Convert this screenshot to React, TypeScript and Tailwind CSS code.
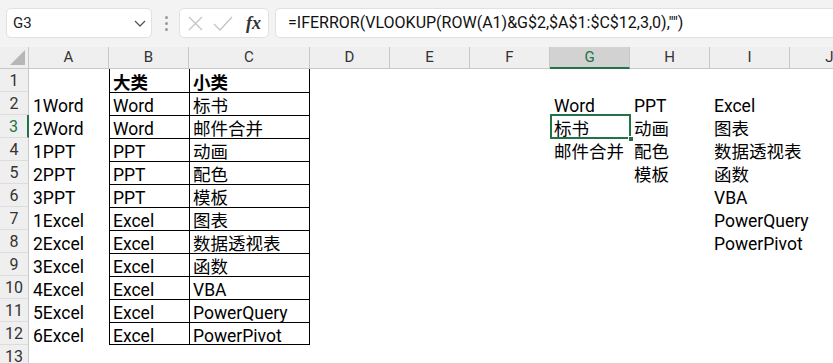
import React from "react";

const COLS = ["A", "B", "C", "D", "E", "F", "G", "H", "I", "J"];

type Row = { a?: string; b?: string; c?: string; g?: string; h?: string; i?: string };

const DATA: Row[] = [
  { b: "大类", c: "小类" },
  { a: "1Word", b: "Word", c: "标书", g: "Word", h: "PPT", i: "Excel" },
  { a: "2Word", b: "Word", c: "邮件合并", g: "标书", h: "动画", i: "图表" },
  { a: "1PPT", b: "PPT", c: "动画", g: "邮件合并", h: "配色", i: "数据透视表" },
  { a: "2PPT", b: "PPT", c: "配色", h: "模板", i: "函数" },
  { a: "3PPT", b: "PPT", c: "模板", i: "VBA" },
  { a: "1Excel", b: "Excel", c: "图表", i: "PowerQuery" },
  { a: "2Excel", b: "Excel", c: "数据透视表", i: "PowerPivot" },
  { a: "3Excel", b: "Excel", c: "函数" },
  { a: "4Excel", b: "Excel", c: "VBA" },
  { a: "5Excel", b: "Excel", c: "PowerQuery" },
  { a: "6Excel", b: "Excel", c: "PowerPivot" },
  {},
];

function bBorder(n: number) {
  if (n === 1) return "shadow-[inset_1px_0_0_#000]";
  if (n === 12) return "shadow-[inset_1px_1px_0_#000,inset_0_-1px_0_#000]";
  if (n < 12) return "shadow-[inset_1px_1px_0_#000]";
  return "";
}

function cBorder(n: number) {
  if (n === 1) return "shadow-[inset_1px_0_0_#000,inset_-1px_0_0_#000]";
  if (n === 12) return "shadow-[inset_1px_1px_0_#000,inset_-1px_-1px_0_#000]";
  if (n < 12) return "shadow-[inset_1px_1px_0_#000,inset_-1px_0_0_#000]";
  return "";
}

function Cell({
  text,
  className = "",
  bold = false,
  children,
}: {
  text?: string;
  className?: string;
  bold?: boolean;
  children?: React.ReactNode;
}) {
  return (
    <div
      className={`relative h-[23px] whitespace-nowrap pl-[4px] pt-[3px] text-[17.5px] leading-[23px] text-black ${
        bold ? "font-bold" : ""
      } ${className}`}
    >
      {text}
      {children}
    </div>
  );
}

export default function App() {
  return (
    <div className="h-[363px] w-[833px] overflow-hidden bg-white font-['Roboto','Noto_Sans_CJK_SC',sans-serif]">
      {/* Formula bar */}
      <div className="flex h-[47px] items-start bg-[#f3f3f3] pt-[8px]">
        <div className="ml-[6px] flex h-[30px] w-[146px] items-center justify-between rounded-[5px] border border-[#e1e1e1] bg-white pl-[6px] pr-[4px]">
          <span className="text-[15px] text-[#222]">G3</span>
          <svg width="14" height="10" viewBox="0 0 14 10">
            <path d="M2 3 L7 8 L12 3" fill="none" stroke="#555" strokeWidth="1.3" />
          </svg>
        </div>
        <div className="ml-[12px] flex h-[30px] w-[4px] flex-col items-center justify-center gap-[3px]">
          <div className="h-[3px] w-[3px] rounded-full bg-[#9a9a9a]" />
          <div className="h-[3px] w-[3px] rounded-full bg-[#9a9a9a]" />
          <div className="h-[3px] w-[3px] rounded-full bg-[#9a9a9a]" />
        </div>
        <div className="ml-[11px] flex h-[30px] w-[90px] items-center rounded-[5px] border border-[#e1e1e1] bg-white">
          <svg className="ml-[8px]" width="15" height="15" viewBox="0 0 15 15">
            <path d="M1 1 L14 14 M14 1 L1 14" stroke="#c4c4c4" strokeWidth="1.3" fill="none" />
          </svg>
          <svg className="ml-[10px]" width="20" height="15" viewBox="0 0 20 15">
            <path d="M1 8 L7 14 L19 1" stroke="#c4c4c4" strokeWidth="1.3" fill="none" />
          </svg>
          <span className="ml-[13px] font-['Liberation_Serif',serif] text-[18px] font-bold italic leading-none text-[#333]">
            fx
          </span>
        </div>
        <div className="ml-[6px] flex h-[30px] flex-1 items-center rounded-l-[5px] border border-r-0 border-[#e1e1e1] bg-white pl-[12px] text-[16px] text-[#111]">
          =IFERROR(VLOOKUP(ROW(A1)&amp;G$2,$A$1:$C$12,3,0),"")
        </div>
      </div>

      {/* Sheet */}
      <div className="grid grid-cols-[29px_80px_80px_121px_80px_80px_80px_80px_80px_80px_80px]">
        {/* Header row */}
        <div className="relative h-[22px] border-b border-r border-[#c8c8c8] bg-[#efefef]">
          <svg className="absolute bottom-[3px] right-[3px]" width="15" height="15" viewBox="0 0 15 15">
            <path d="M15 0 L15 15 L0 15 Z" fill="#b7b7b7" />
          </svg>
        </div>
        {COLS.map((c) => (
          <div
            key={c}
            className={`flex h-[22px] items-center justify-center border-r text-[15px] leading-none ${
              c === "G"
                ? "border-b-2 border-r-[#c8c8c8] border-b-[#217346] bg-[#d2d2d2] text-[#217346]"
                : "border-b border-[#c8c8c8] bg-[#efefef] text-[#333]"
            }`}
          >
            {c}
          </div>
        ))}

        {/* Rows */}
        {DATA.map((r, idx) => {
          const n = idx + 1;
          return (
            <React.Fragment key={n}>
              <div
                className={`flex h-[23px] items-center justify-center border-b bg-[#efefef] pt-[1px] text-[16px] leading-none ${
                  n === 3
                    ? "border-r-2 border-b-[#dcdcdc] border-r-[#217346] bg-[#d2d2d2] text-[#217346]"
                    : "border-r border-[#dcdcdc] border-r-[#c8c8c8] text-[#333]"
                }`}
              >
                {n}
              </div>
              <Cell text={r.a} />
              <Cell text={r.b} bold={n === 1} className={bBorder(n)} />
              <Cell text={r.c} bold={n === 1} className={cBorder(n)} />
              <Cell />
              <Cell />
              <Cell />
              <Cell text={r.g}>
                {n === 3 && (
                  <>
                    <div className="pointer-events-none absolute -bottom-[1px] left-0 -right-[1px] -top-[1px] border-2 border-[#217346]" />
                    <div className="absolute -bottom-[4px] -right-[4px] h-[6px] w-[6px] border border-white bg-[#217346]" />
                  </>
                )}
              </Cell>
              <Cell text={r.h} />
              <Cell text={r.i} />
              <Cell />
            </React.Fragment>
          );
        })}
      </div>
    </div>
  );
}
